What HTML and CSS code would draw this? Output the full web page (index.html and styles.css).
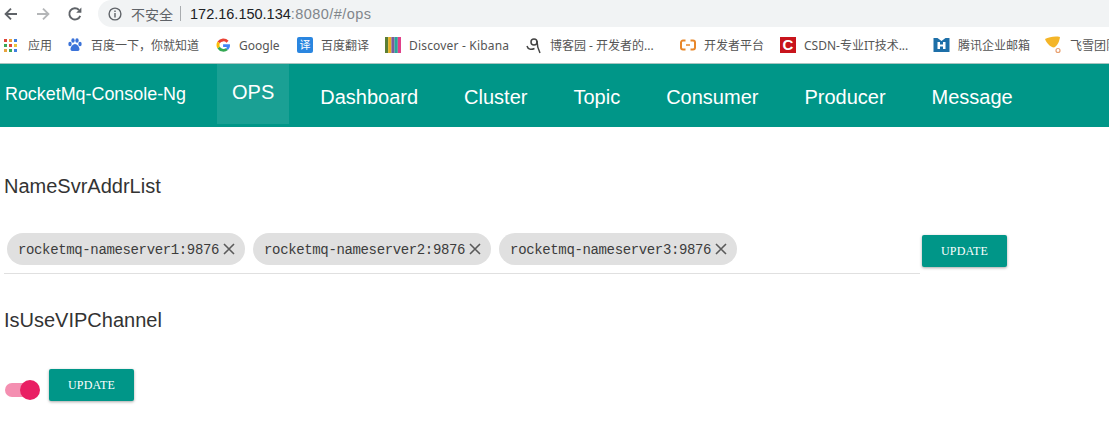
FILE: index.html
```html
<!DOCTYPE html>
<html lang="zh-CN">
<head>
<meta charset="utf-8">
<title>RocketMq-Console-Ng</title>
<link rel="stylesheet" href="styles.css">
</head>
<body>
<div class="chrome">
  <div class="toolbar">
    <svg class="nav-icon" width="16" height="16" viewBox="0 0 16 16"><path d="M14 8H3M8 2.600 2.600 8 8 13.400" fill="none" stroke="#5f6368" stroke-width="1.900"/></svg>
    <svg class="nav-icon" width="16" height="16" viewBox="0 0 16 16"><path d="M2 8h11M8 2.600 13.400 8 8 13.400" fill="none" stroke="#b4b6b8" stroke-width="1.900"/></svg>
    <svg class="nav-icon" width="16" height="16" viewBox="0 0 16 16"><path d="M13.200 9.800A5.600 5.600 0 1 1 12 4" fill="none" stroke="#5f6368" stroke-width="1.900"/><path d="M14.400 1.600v5.200H9.200z" fill="#5f6368"/></svg>
    <div class="omnibox">
      <svg class="info" width="14" height="14" viewBox="0 0 14 14"><circle cx="7" cy="7" r="5.900" fill="none" stroke="#5f6368" stroke-width="1.400"/><path d="M6.300 6h1.400v4.400H6.300zM6.300 3.500h1.400v1.400H6.300z" fill="#5f6368"/></svg>
      <span class="insecure">不安全</span>
      <span class="sep"></span>
      <span class="host">172.16.150.134</span><span class="path">:8080/#/ops</span>
    </div>
  </div>
  <div class="bookmarks">
    <span class="bm bm-apps"><svg width="16" height="16" viewBox="0 0 16 16"><g><rect x="1" y="2" width="3" height="3" fill="#e0453a"/><rect x="6" y="2" width="3" height="3" fill="#e8a33d"/><rect x="11" y="2" width="3" height="3" fill="#3f7fe0"/><rect x="1" y="7" width="3" height="3" fill="#3aa757"/><rect x="6" y="7" width="3" height="3" fill="#e0453a"/><rect x="11" y="7" width="3" height="3" fill="#e8c53d"/><rect x="1" y="12" width="3" height="3" fill="#e8a33d"/><rect x="6" y="12" width="3" height="3" fill="#3aa757"/><rect x="11" y="12" width="3" height="3" fill="#3f7fe0"/></g></svg>应用</span>
    <span class="bm bm-baidu"><svg width="16" height="16" viewBox="0 0 16 16"><g fill="#3b73d9"><ellipse cx="3" cy="7" rx="1.700" ry="2.200"/><ellipse cx="6" cy="3.500" rx="1.700" ry="2.300"/><ellipse cx="10" cy="3.500" rx="1.700" ry="2.300"/><ellipse cx="13" cy="7" rx="1.700" ry="2.200"/><path d="M8 7c2 0 4.500 3 4.500 5.200C12.500 14.500 10 14 8 14s-4.500.5-4.500-1.800C3.500 10 6 7 8 7z"/></g></svg>百度一下，你就知道</span>
    <span class="bm bm-google"><svg width="16" height="16" viewBox="0 0 16 16"><path d="M13.600 3.800A7 7 0 0 0 2.500 4.500L4.800 6.300A4.200 4.200 0 0 1 11.500 5.800z" fill="#ea4335"/><path d="M2.500 4.500a7 7 0 0 0 0 7l2.300-1.800a4.200 4.200 0 0 1 0-3.400z" fill="#fbbc05"/><path d="M2.500 11.500a7 7 0 0 0 10.500 1.400l-2.200-1.700a4.200 4.200 0 0 1-6-1.500z" fill="#34a853"/><path d="M15 8.600c0-.5 0-1-.1-1.400H8.100V10h3.900a3.400 3.400 0 0 1-1.200 1.200l2.200 1.700C14.300 11.700 15 10.300 15 8.600z" fill="#4285f4"/></svg>Google</span>
    <span class="bm bm-trans"><span class="trans-icon">译</span>百度翻译</span>
    <span class="bm bm-kibana"><svg width="16" height="16" viewBox="0 0 16 16"><rect width="3.200" height="16" fill="#5b7f35"/><rect x="3.200" width="3.200" height="16" fill="#e8b020"/><rect x="6.400" width="3.200" height="16" fill="#7a5a9c"/><rect x="9.600" width="3.200" height="16" fill="#27a79a"/><rect x="12.800" width="3.200" height="16" fill="#e0408a"/></svg><span class="kibana-text">Discover - Kibana</span></span>
    <span class="bm bm-cnblogs"><svg width="16" height="17" viewBox="0 0 16 17"><path d="M1 9c1 3.500 4 4 7.500 2.500" fill="none" stroke="#444" stroke-width="1.500"/><circle cx="8" cy="5" r="3" fill="none" stroke="#444" stroke-width="1.500"/><path d="M11 4c0 4 1 8 3 12" fill="none" stroke="#444" stroke-width="1.500"/></svg>博客园 - 开发者的...</span>
    <span class="bm bm-ali"><svg width="16" height="12" viewBox="0 0 16 12"><path d="M5.500 1.500H3A2 2 0 0 0 1 3.500v5a2 2 0 0 0 2 2h2.500M10.500 1.500H13a2 2 0 0 1 2 2v5a2 2 0 0 1-2 2h-2.500" fill="none" stroke="#e8872b" stroke-width="2"/><path d="M6 6h4" stroke="#e8872b" stroke-width="1.500"/></svg>开发者平台</span>
    <span class="bm bm-csdn"><span class="csdn-icon">C</span>CSDN-专业IT技术...</span>
    <span class="bm bm-qq"><svg width="17" height="14" viewBox="0 0 16 14"><path d="M0 0h4l4 3 4-3h4v14H0z" fill="#1d6fa8"/><path d="M4 4h2.500v2.500h3V4H12v7H9.500V8.500h-3V11H4z" fill="#fff"/></svg>腾讯企业邮箱</span>
    <span class="bm bm-fx"><svg width="18" height="18" viewBox="0 0 18 18"><path d="M0 3c4-2 10-3 15-2-.5 4-2.500 9-6 10.500C5 11 1.500 7 0 3z" fill="#f4b528"/><circle cx="13" cy="14.500" r="2" fill="none" stroke="#e8a070" stroke-width="1.200"/></svg>飞雪团队</span>
  </div>
</div>
<header class="navbar">
  <span class="brand">RocketMq-Console-Ng</span>
  <nav class="menu">
    <a class="item active">OPS</a>
    <a class="item">Dashboard</a>
    <a class="item">Cluster</a>
    <a class="item">Topic</a>
    <a class="item">Consumer</a>
    <a class="item">Producer</a>
    <a class="item">Message</a>
  </nav>
</header>
<main class="content">
  <h2 class="title">NameSvrAddrList</h2>
  <div class="addr-row">
    <div class="chips">
      <span class="chip">rocketmq-nameserver1:9876<svg class="x" width="12" height="12" viewBox="0 0 12 12"><path d="M1 1l10 10M11 1 1 11" stroke="#5a5a5a" stroke-width="1.600"/></svg></span>
      <span class="chip">rocketmq-nameserver2:9876<svg class="x" width="12" height="12" viewBox="0 0 12 12"><path d="M1 1l10 10M11 1 1 11" stroke="#5a5a5a" stroke-width="1.600"/></svg></span>
      <span class="chip">rocketmq-nameserver3:9876<svg class="x" width="12" height="12" viewBox="0 0 12 12"><path d="M1 1l10 10M11 1 1 11" stroke="#5a5a5a" stroke-width="1.600"/></svg></span>
    </div>
    <button class="btn">UPDATE</button>
  </div>
  <h2 class="title title-vip">IsUseVIPChannel</h2>
  <div class="vip-row">
    <span class="switch"><span class="track"></span><span class="thumb"></span></span>
    <button class="btn">UPDATE</button>
  </div>
</main>
</body>
</html>
```
FILE: styles.css
```css
* { box-sizing: border-box; }
html, body { margin: 0; padding: 0; background: #fff; overflow: hidden; }
body { width: 1109px; height: 438px; font-family: "Liberation Sans", Arial, "Noto Sans CJK SC", sans-serif; color: #333; }

.chrome { height: 64px; background: #fff; overflow: hidden; }
.toolbar { height: 27px; display: flex; align-items: center; background: #fff; padding-left: 3px; }
.nav-icon { margin-right: 16px; flex: none; }
.omnibox { margin-left: -1px; height: 27px; flex: 1; display: flex; align-items: center; background: #f1f3f4; padding-left: 10px; border-radius: 14px 0 0 14px; font-size: 14px; }
.info { margin-right: 9px; }
.insecure { font-size: 14px; color: #5f6368; }
.sep { width: 1px; height: 15px; background: #a9acaf; margin: 0 9px 0 7px; }
.host { color: #202124; font-size: 14.500px; }
.path { color: #80868b; font-size: 14.500px; letter-spacing: .45px; }

.bookmarks { height: 37px; display: flex; align-items: center; padding-left: 3px; font-family: "Noto Sans", "Noto Sans CJK SC", sans-serif; font-size: 12px; color: #555; white-space: nowrap; overflow: hidden; border-bottom: 1px solid #a8c4c0; }
.bm { display: flex; align-items: center; gap: 8px; flex: none; }
.bm-apps { width: 64px; gap: 9px; }
.bm-baidu { width: 148px; gap: 8px; }
.bm-google { width: 82px; }
.bm-trans { width: 88px; }
.bm-kibana { width: 141px; }
.kibana-text { letter-spacing: .18px; }
.bm-cnblogs { width: 154px; }
.bm-ali { width: 100px; }
.bm-csdn { width: 153px; }
.bm-qq { width: 112px; }
.bm-fx { gap: 7px; }
.trans-icon { width: 16px; height: 16px; background: #2a86e0; color: #fff; border-radius: 2px; font-size: 11px; line-height: 16px; text-align: center; }
.csdn-icon { width: 16px; height: 16px; background: #c8141c; color: #fff; font-family: "Liberation Sans", sans-serif; font-size: 15px; font-weight: bold; line-height: 16px; text-align: center; }

.navbar { height: 63px; background: #009688; display: flex; align-items: stretch; color: #fff; }
.brand { font-size: 17.900px; width: 217px; padding: 20px 0 0 5px; line-height: 21px; }
.menu { display: flex; }
.item { font-size: 20px; line-height: 23px; padding: 22px 23px 0; }
.item.active { background: rgba(255,255,255,.1); height: 60px; padding: 17px 15px 0; margin-right: 8px; }

.content { padding: 0 0 0 4px; }
.title { margin: 0; font-size: 20px; font-weight: 400; line-height: 24px; color: #333; padding-top: 47px; }
.addr-row { display: flex; align-items: flex-start; margin-top: 32px; }
.chips { width: 916px; height: 44px; border-bottom: 1px solid #e0e0e0; display: flex; gap: 8px; padding: 3px 0 0 3px; }
.chip { height: 32px; border-radius: 16px; background: #e0e0e0; display: flex; align-items: center; padding: 1px 10px 0 11px; font-family: "Liberation Mono", monospace; font-size: 14px; color: #3c3c3c; white-space: nowrap; letter-spacing: -.36px; }
.x { margin: -2px 0 0 4px; flex: none; }
.btn { width: 85px; height: 32px; margin: 5px 0 0 2px; border: 0; border-radius: 2px; background: #009688; color: #fff; font-family: "Liberation Serif", serif; font-size: 12px; letter-spacing: .2px; box-shadow: 0 1px 3px rgba(0,0,0,.35); padding: 0; }
.title-vip { padding-top: 34px; }
.vip-row { display: flex; align-items: flex-start; margin-top: 37px; }
.switch { position: relative; width: 36px; height: 20px; display: block; margin: 11px 0 0 1px; }
.track { position: absolute; left: 0; top: 3px; width: 34px; height: 14px; border-radius: 7px; background: #f48fb1; }
.thumb { position: absolute; left: 15px; top: 0; width: 20px; height: 20px; border-radius: 50%; background: #e91e63; }
.vip-row .btn { margin: 0 0 0 8px; }
```
